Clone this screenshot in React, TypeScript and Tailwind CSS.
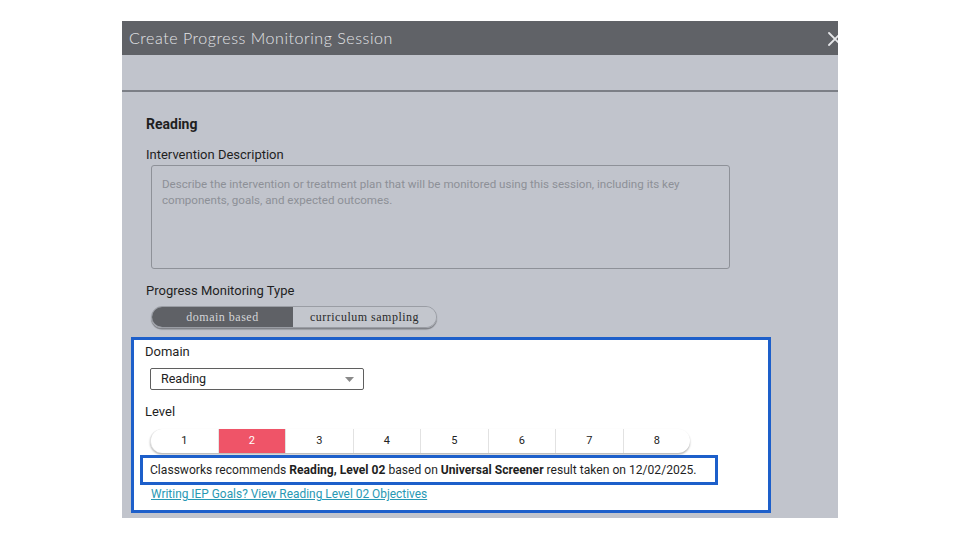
import React from "react";

const LEVELS = [1, 2, 3, 4, 5, 6, 7, 8];

function CloseIcon() {
  return (
    <svg width="16" height="16" viewBox="0 0 16 16" className="shrink-0">
      <path d="M2 2 L14 14 M14 2 L2 14" stroke="#e6e7ea" strokeWidth="1.8" strokeLinecap="round" />
    </svg>
  );
}

export default function App() {
  return (
    <div className="w-[960px] h-[540px] bg-white overflow-hidden font-['Roboto',sans-serif]">
      <div className="ml-[122px] mt-[21px] w-[716px] h-[497px] bg-[#c1c4cc] flex flex-col overflow-hidden">
        {/* Header */}
        <div className="h-[34px] shrink-0 bg-[#606267] flex items-center pl-[7px]">
          <span className="text-[16px] text-[#e4e5e8] font-['Lato',sans-serif] font-light tracking-[0.55px]">
            Create Progress Monitoring Session
          </span>
          <div className="ml-auto -mr-[5px] mt-[2px]">
            <CloseIcon />
          </div>
        </div>
        <div className="h-[35px] shrink-0" />
        <div className="h-[2px] shrink-0 bg-[#7c7f86]" />

        {/* Body */}
        <div className="pl-[24px] pt-[22px] flex flex-col items-start text-[#1f1f1f]">
          <div className="text-[14px] leading-[20px] font-bold">Reading</div>
          <div className="mt-[11px] text-[13px] leading-[20px]">Intervention Description</div>
          <div className="ml-[5px] w-[579px] h-[104px] border border-[#8e9198] rounded-[3px] px-[10px] pt-[10px] text-[11.6px] leading-[16px] text-[#8d9097]">
            Describe the intervention or treatment plan that will be monitored using this session, including its key
            components, goals, and expected outcomes.
          </div>

          <div className="mt-[12px] text-[13px] leading-[20px]">Progress Monitoring Type</div>
          <div className="mt-[5px] ml-[5px] flex h-[22px] rounded-full shadow-[0_1.5px_1px_rgba(0,0,0,0.35)] border border-[#9a9da4] overflow-hidden font-['Liberation_Serif',serif] text-[12px] tracking-[0.5px]">
            <div className="w-[141px] bg-[#5f6166] text-[#d4d5d8] flex items-center justify-center">domain based</div>
            <div className="w-[143px] bg-[#c3c6cd] text-[#2a2a2a] flex items-center justify-center">curriculum sampling</div>
          </div>

          {/* Highlighted region */}
          <div className="mt-[9px] -ml-[15px] w-[640px] h-[176px] border-[3px] border-[#1d5fca] bg-white flex flex-col items-start">
            <div className="pl-[11px] pt-[2px] text-[13px] leading-[20px]">Domain</div>
            <div className="mt-[6px] ml-[16px] w-[214px] h-[22px] border border-[#5f5f5f] rounded-[2px] flex items-center pl-[10px] pr-[9px] text-[12.5px] text-[#222]">
              <span>Reading</span>
              <svg width="9" height="5" viewBox="0 0 9 5" className="ml-auto">
                <path d="M0 0 L9 0 L4.5 5 Z" fill="#8a8a8a" />
              </svg>
            </div>

            <div className="mt-[12px] pl-[11px] text-[13px] leading-[20px]">Level</div>
            <div className="mt-[7px] ml-[16px] w-[540px] h-[24px] flex rounded-full overflow-hidden bg-white shadow-[0_1.5px_2px_rgba(0,0,0,0.3)] border-l border-[#e2e2e2]">
              {LEVELS.map((n) => (
                <div
                  key={n}
                  className={
                    n === 2
                      ? "flex-1 flex items-center justify-center text-[11px] bg-[#ef5468] text-white border-l border-[#e6e6e6]"
                      : n === 1
                      ? "flex-1 flex items-center justify-center text-[11px] text-[#222]"
                      : "flex-1 flex items-center justify-center text-[11px] text-[#222] border-l border-[#e2e2e2]"
                  }
                >
                  {n}
                </div>
              ))}
            </div>

            <div className="mt-[2px] ml-[6px] w-[578px] h-[30px] border-[3px] border-[#1d5fca] flex items-center pl-[7px] text-[12.1px] text-[#1f1f1f]">
              <span>
                Classworks recommends <b>Reading, Level 02</b> based on <b>Universal Screener</b> result taken on 12/02/2025.
              </span>
            </div>
            <a className="mt-[1px] ml-[17px] text-[11.9px] leading-[16px] text-[#2898b4] underline">
              Writing IEP Goals? View Reading Level 02 Objectives
            </a>
          </div>
        </div>
      </div>
    </div>
  );
}
